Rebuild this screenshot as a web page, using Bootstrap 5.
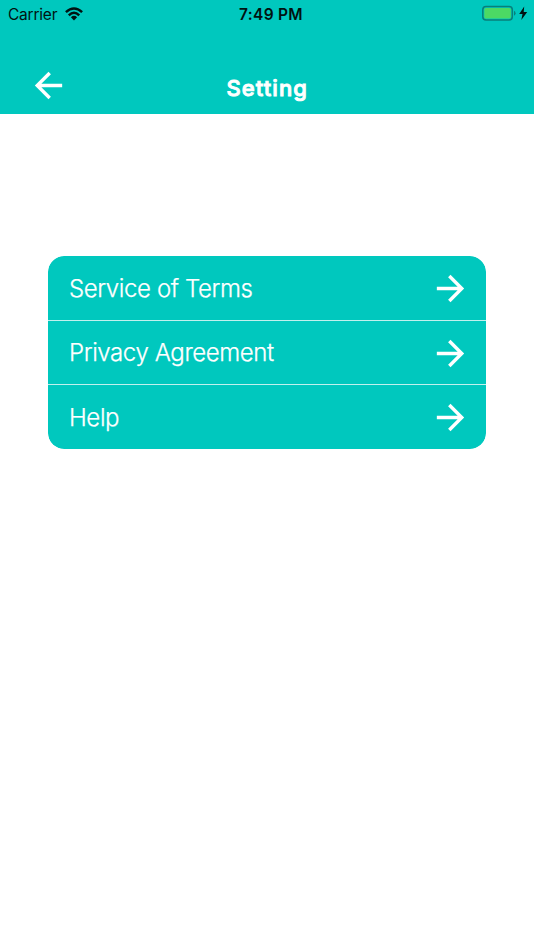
<!DOCTYPE html>
<html lang="en">
<head>
<meta charset="utf-8">
<meta name="viewport" content="width=device-width, initial-scale=1">
<title>Setting</title>
<link href="https://cdn.jsdelivr.net/npm/bootstrap@5.3.0/dist/css/bootstrap.min.css" rel="stylesheet">
<style>
:root{--teal:#00c8be}
body{font-family:Inter,"Liberation Sans",sans-serif;min-height:950px}
svg{display:block;flex:none}
.app-header{background:var(--teal);height:114px}
.status-bar{height:28px;padding:0 6px 0 8px;font-size:15.5px;line-height:28px;color:#001211}
.status-side{flex:1 1 0}
.carrier{letter-spacing:-.22px;padding-top:1px}
.clock{font-weight:600;letter-spacing:.3px;padding:1px 0 0 6px}
.wifi{margin-left:8px;margin-top:-1px}
.battery{margin-top:-2px}
.title-bar{height:86px;padding:0 28px 0 27.5px}
.title-side{width:41px}
.page-title{font-family:"Comic Sans MS","Chalkboard SE",Inter,sans-serif;font-size:22px;font-weight:500;line-height:30px;letter-spacing:1.05px;margin-top:45px;padding-left:1px;-webkit-text-stroke:.9px #fff}
.back-btn{margin-top:37px}
.menu-list{margin:142px 48px 0;border-radius:16px;overflow:hidden}
.menu-list .list-group-item{background:var(--teal);height:64px;padding:1px 15.5px 0 21px;font-size:24px;line-height:30px;letter-spacing:-.4px;border:0;font-weight:300;-webkit-text-stroke:.25px #fff}
.menu-list .list-group-item+.list-group-item{border-top:1px solid #c0f1ee;height:64px}
.menu-list .list-group-item:last-child{height:65px!important}
</style>
</head>
<body class="bg-white">
<header class="app-header text-white">
  <div class="status-bar d-flex">
    <div class="status-side d-flex align-items-center">
      <span class="carrier">Carrier</span>
      <svg class="wifi" width="18" height="14" viewBox="0 0 18 14" fill="none" stroke="#001211" stroke-width="2.5"><path d="M.9 5.2Q9-2.2 17.1 5.2M3.8 8.3Q9 3.3 14.2 8.3"/><path d="M9 13.4 5.9 10.2Q9 7.5 12.1 10.2Z" fill="#001211" stroke="none"/></svg>
    </div>
    <span class="clock">7:49 PM</span>
    <div class="status-side d-flex align-items-center justify-content-end">
      <svg class="battery" width="46" height="16" viewBox="0 0 46 16"><rect x=".8" y="1.5" width="29.5" height="13.5" rx="3.2" fill="none" stroke="#087f7a" stroke-width="1.5"/><rect x="2.3" y="3" width="26.5" height="10.5" rx="1.5" fill="#4cd964"/><path d="M32 5.7Q33.6 6.5 33.6 8.2T32 10.8Z" fill="#087f7a"/><path d="M42.2 1.5 37.2 9h3.3l-1.2 6L45.2 7h-3.5Z" fill="#001211"/></svg>
    </div>
  </div>
  <div class="title-bar d-flex justify-content-between align-items-start">
    <svg class="back-btn" width="41" height="41" viewBox="0 0 24 24" fill="#fff"><path d="M20 11H7.83l5.59-5.59L12 4l-8 8 8 8 1.41-1.41L7.83 13H20v-2z"/></svg>
    <h1 class="page-title mb-0">Setting</h1>
    <div class="title-side"></div>
  </div>
</header>
<main>
  <div class="menu-list list-group">
    <a class="list-group-item d-flex align-items-center justify-content-between text-white"><span>Service of Terms</span><svg width="41" height="41" viewBox="0 0 24 24" fill="#fff"><path d="M12 4l-1.41 1.41L16.17 11H4v2h12.17l-5.58 5.59L12 20l8-8z"/></svg></a>
    <a class="list-group-item d-flex align-items-center justify-content-between text-white"><span>Privacy Agreement</span><svg width="41" height="41" viewBox="0 0 24 24" fill="#fff"><path d="M12 4l-1.41 1.41L16.17 11H4v2h12.17l-5.58 5.59L12 20l8-8z"/></svg></a>
    <a class="list-group-item d-flex align-items-center justify-content-between text-white"><span>Help</span><svg width="41" height="41" viewBox="0 0 24 24" fill="#fff"><path d="M12 4l-1.41 1.41L16.17 11H4v2h12.17l-5.58 5.59L12 20l8-8z"/></svg></a>
  </div>
</main>
<script src="https://cdn.jsdelivr.net/npm/bootstrap@5.3.0/dist/js/bootstrap.bundle.min.js"></script>
</body>
</html>
